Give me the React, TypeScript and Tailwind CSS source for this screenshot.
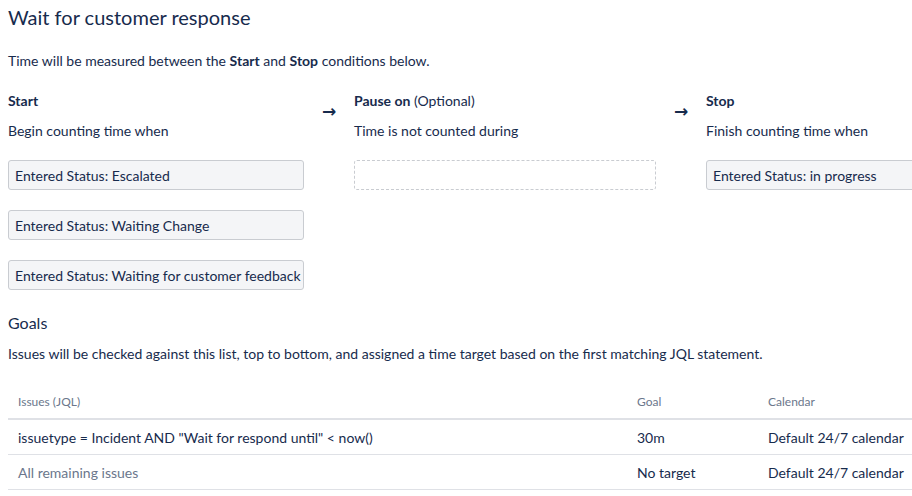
import React from "react";

const font = { fontFamily: 'Lato, "Noto Sans", sans-serif' };

function Box({ children }: { children: React.ReactNode }) {
  return (
    <div className="h-[30px] rounded-[3px] border border-[#c9ccd1] bg-[#f4f5f7] px-[6px] text-[14px] leading-[29px] text-[#172b4d] whitespace-nowrap overflow-hidden">
      {children}
    </div>
  );
}

function Arrow() {
  return (
    <div className="w-[50px] shrink-0 flex justify-center pt-[10px]">
      <span className="text-[17px] leading-[20px] font-bold text-[#172b4d]" style={{ fontFamily: '"DejaVu Sans", sans-serif' }}>
        →
      </span>
    </div>
  );
}

export default function App() {
  return (
    <div className="w-[912px] h-[496px] overflow-hidden bg-white text-[#172b4d]" style={font}>
      <div className="pl-[8px]">
        <h1 className="pt-[5px] text-[20px] leading-[24px] font-normal">Wait for customer response</h1>
        <p className="mt-[22px] text-[14px] leading-[20px]">
          Time will be measured between the <b>Start</b> and <b>Stop</b> conditions below.
        </p>

        <div className="mt-[20px] flex w-[1000px]">
          <div className="w-[296px] shrink-0">
            <div className="text-[14px] leading-[20px] font-bold">Start</div>
            <div className="mt-[10px] text-[14px] leading-[20px]">Begin counting time when</div>
            <div className="mt-[19px] flex flex-col gap-[20px]">
              <Box>Entered Status: Escalated</Box>
              <Box>Entered Status: Waiting Change</Box>
              <Box>Entered Status: Waiting for customer feedback</Box>
            </div>
          </div>
          <Arrow />
          <div className="w-[302px] shrink-0">
            <div className="text-[14px] leading-[20px]">
              <b>Pause on</b> (Optional)
            </div>
            <div className="mt-[10px] text-[14px] leading-[20px]">Time is not counted during</div>
            <div className="mt-[19px] h-[30px] rounded-[3px] border border-dashed border-[#c9ccd1]" />
          </div>
          <Arrow />
          <div className="w-[302px] shrink-0">
            <div className="text-[14px] leading-[20px] font-bold">Stop</div>
            <div className="mt-[10px] text-[14px] leading-[20px]">Finish counting time when</div>
            <div className="mt-[19px]">
              <Box>Entered Status: in progress</Box>
            </div>
          </div>
        </div>

        <h2 className="mt-[21px] text-[16px] leading-[24px] font-normal">Goals</h2>
        <p className="mt-[9px] text-[14px] leading-[20px]">
          Issues will be checked against this list, top to bottom, and assigned a time target based on the first matching JQL statement.
        </p>

        <div className="mt-[22px] w-[904px]">
          <div className="flex border-b-2 border-[#dfe1e6] pt-[8px] pb-[8px] text-[12px] leading-[16px] text-[#6b778c]">
            <div className="w-[619px] pl-[10px]">Issues (JQL)</div>
            <div className="w-[131px] pl-[10px]">Goal</div>
            <div className="flex-1 pl-[10px]">Calendar</div>
          </div>
          <div className="flex border-b border-[#dfe1e6] pt-[8px] pb-[6px] text-[14px] leading-[20px]">
            <div className="w-[619px] pl-[10px]">issuetype = Incident AND "Wait for respond until" &lt; now()</div>
            <div className="w-[131px] pl-[10px]">30m</div>
            <div className="flex-1 pl-[10px] whitespace-nowrap">Default 24/7 calendar</div>
          </div>
          <div className="flex border-b border-[#dfe1e6] pt-[8px] pb-[6px] text-[14px] leading-[20px]">
            <div className="w-[619px] pl-[10px] text-[#6b778c]">All remaining issues</div>
            <div className="w-[131px] pl-[10px]">No target</div>
            <div className="flex-1 pl-[10px] whitespace-nowrap">Default 24/7 calendar</div>
          </div>
        </div>
      </div>
    </div>
  );
}
